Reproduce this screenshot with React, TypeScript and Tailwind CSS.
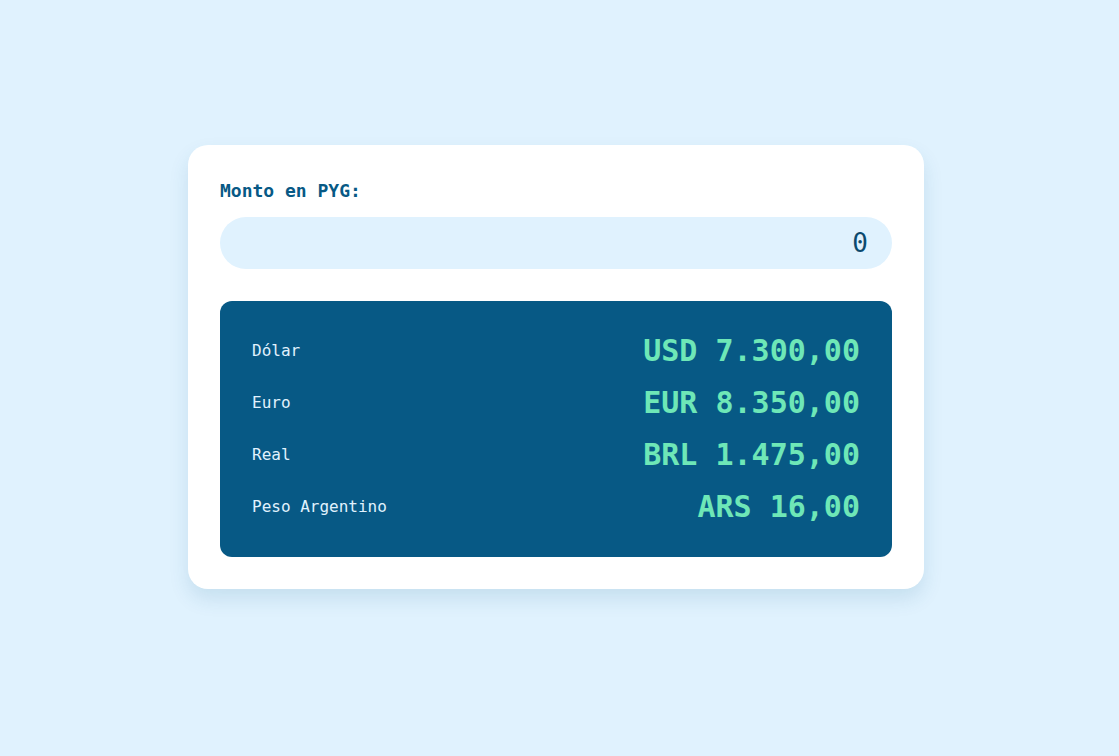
import React from "react";

const rows = [
  { name: "Dólar", value: "USD 7.300,00" },
  { name: "Euro", value: "EUR 8.350,00" },
  { name: "Real", value: "BRL 1.475,00" },
  { name: "Peso Argentino", value: "ARS 16,00" },
];

export default function App() {
  return (
    <div
      className="min-h-screen w-full bg-[#e0f2fe] pt-[145px] pl-[188px]"
      style={{ fontFamily: '"DejaVu Sans Mono", "Liberation Mono", monospace' }}
    >
      <div className="w-[736px] rounded-[20px] bg-white p-8 shadow-[0_10px_20px_rgba(7,89,133,0.12)]">
        <label className="mb-3 block text-[18px] font-bold leading-7 text-[#075985]">
          Monto en PYG:
        </label>
        <input
          readOnly
          value="0"
          className="block w-full rounded-full bg-[#e0f2fe] px-6 py-2.5 text-right text-[26px] leading-8 text-[#0c4a6e] outline-none"
          style={{ fontFamily: '"DejaVu Sans Mono", "Liberation Mono", monospace' }}
        />
        <div className="mt-8 flex flex-col gap-4 rounded-xl bg-[#075985] p-8">
          {rows.map((r) => (
            <div key={r.name} className="flex h-9 items-center justify-between">
              <span className="text-[16px] text-[#e0f2fe]">{r.name}</span>
              <span className="text-[30px] font-bold leading-9 text-[#6ee7b7]">{r.value}</span>
            </div>
          ))}
        </div>
      </div>
    </div>
  );
}
